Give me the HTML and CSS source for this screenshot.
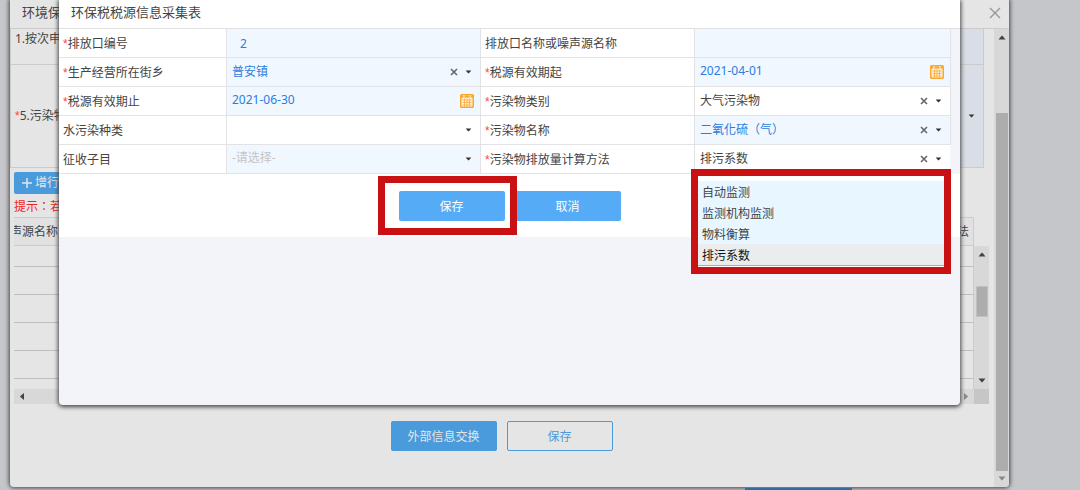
FILE: index.html
```html
<!DOCTYPE html>
<html lang="zh-CN">
<head>
<meta charset="utf-8">
<title>环保税税源信息采集表</title>
<link rel="stylesheet" href="styles.css">
</head>
<body>
<svg class="defs" aria-hidden="true">
  <symbol id="caret" viewBox="0 0 8 5"><path d="M0.500 0.500h7L5 3.500 4 4.500 3 3.500z"/></symbol>
  <symbol id="cross" viewBox="0 0 8 8"><path d="M1 1l6 6M7 1L1 7" fill="none" stroke="currentColor" stroke-width="1.600"/></symbol>
  <symbol id="calendar" viewBox="0 0 14 14">
    <rect x="0.700" y="0.700" width="12.600" height="12.600" rx="1.500" fill="#fff3dc" stroke="#fba62c" stroke-width="1.600"/>
    <path d="M1 2.500h12" stroke="#fba62c" stroke-width="2.200"/>
    <path d="M4 1v3M10 1v3" stroke="#fff3dc" stroke-width="1"/>
    <path d="M2.500 6h9M2.500 8.500h9M2.500 11h9M4.500 4.500v8M7 4.500v8M9.500 4.500v8" stroke="#fbb654" stroke-width="1"/>
  </symbol>
</svg>
<div class="desktop">
  <div class="page-strip"></div>
  <section class="window">
    <header class="window-head">
      <h2 class="window-title">环境保</h2>
      <button class="window-close" type="button" aria-label="关闭"><svg viewBox="0 0 12 12"><path d="M1 1l10 10M11 1L1 11" fill="none" stroke="#969696" stroke-width="1.300"/></svg></button>
    </header>
    <div class="window-body">
      <main class="content">
        <div class="info">
          <div class="info-label">1.按次申</div><div class="info-field"></div>
          <div class="info-label info-tall"><span><i class="req">*</i>5.污染物</span></div>
          <div class="info-field info-tall"><button class="icon-btn" type="button" aria-label="展开"><svg class="caret"><use href="#caret"/></svg></button></div>
        </div>
        <div class="list">
          <button class="add" type="button"><svg viewBox="0 0 10 10"><path d="M5 0v10M0 5h10" stroke="currentColor" stroke-width="1.500"/></svg>增行</button>
          <p class="hint centred-marks">提示：若</p>
          <div class="grid">
            <div class="grid-head"><div class="first-head"><span>声源名称</span></div><span>法</span></div>
            <div class="grid-rows">
              <div class="grid-row short"></div><div class="grid-row"></div><div class="grid-row"></div><div class="grid-row"></div><div class="grid-row"></div>
            </div>
            <div class="v-bar"><svg class="arrow up"><use href="#caret"/></svg><div class="v-thumb"></div><svg class="arrow"><use href="#caret"/></svg></div>
            <div class="h-bar"><svg class="arrow left"><use href="#caret"/></svg><svg class="arrow right faint"><use href="#caret"/></svg></div>
            <div class="corner"></div>
          </div>
          <div class="actions page-actions">
            <button class="btn dim" type="button">外部信息交换</button>
            <button class="btn outline" type="button">保存</button>
          </div>
        </div>
      </main>
      <div class="page-bar"><svg class="arrow up"><use href="#caret"/></svg><div class="page-thumb"></div><svg class="arrow faint"><use href="#caret"/></svg></div>
    </div>

    <section class="modal" role="dialog" aria-labelledby="modal-title">
      <h1 class="modal-title" id="modal-title">环保税税源信息采集表</h1>
      <form>
        <div class="form-area">
          <div class="form-grid">
            <label class="label" for="f-no"><i class="req">*</i>排放口编号</label>
            <div class="field tint"><input class="indent" id="f-no" value="2"></div>
            <label class="label" for="f-outlet">排放口名称或噪声源名称</label>
            <div class="field tint"><input id="f-outlet"></div>

            <label class="label" for="f-town"><i class="req">*</i>生产经营所在街乡</label>
            <div class="field tint"><input id="f-town" value="普安镇"><button class="icon-btn" type="button" aria-label="清除"><svg class="cross"><use href="#cross"/></svg></button><button class="icon-btn" type="button" aria-label="展开"><svg class="caret"><use href="#caret"/></svg></button></div>
            <label class="label" for="f-start"><i class="req">*</i>税源有效期起</label>
            <div class="field tint"><input id="f-start" value="2021-04-01"><button class="icon-btn" type="button" aria-label="选择日期"><svg class="calendar"><use href="#calendar"/></svg></button></div>

            <label class="label" for="f-end"><i class="req">*</i>税源有效期止</label>
            <div class="field tint"><input id="f-end" value="2021-06-30"><button class="icon-btn" type="button" aria-label="选择日期"><svg class="calendar"><use href="#calendar"/></svg></button></div>
            <label class="label" for="f-type"><i class="req">*</i>污染物类别</label>
            <div class="field"><input class="dark" id="f-type" value="大气污染物"><button class="icon-btn" type="button" aria-label="清除"><svg class="cross"><use href="#cross"/></svg></button><button class="icon-btn" type="button" aria-label="展开"><svg class="caret"><use href="#caret"/></svg></button></div>

            <label class="label" for="f-water">水污染种类</label>
            <div class="field"><input id="f-water"><button class="icon-btn" type="button" aria-label="展开"><svg class="caret"><use href="#caret"/></svg></button></div>
            <label class="label" for="f-name"><i class="req">*</i>污染物名称</label>
            <div class="field tint"><input class="centred-marks" id="f-name" value="二氧化硫（气）"><button class="icon-btn" type="button" aria-label="清除"><svg class="cross"><use href="#cross"/></svg></button><button class="icon-btn" type="button" aria-label="展开"><svg class="caret"><use href="#caret"/></svg></button></div>

            <label class="label" for="f-sub">征收子目</label>
            <div class="field tint"><input id="f-sub" placeholder="-请选择-"><button class="icon-btn" type="button" aria-label="展开"><svg class="caret"><use href="#caret"/></svg></button></div>
            <label class="label" for="f-method"><i class="req">*</i>污染物排放量计算方法</label>
            <div class="field active"><input class="dark" id="f-method" value="排污系数" role="combobox" aria-expanded="true" aria-controls="methods"><button class="icon-btn" type="button" aria-label="清除"><svg class="cross"><use href="#cross"/></svg></button><button class="icon-btn" type="button" aria-label="展开"><svg class="caret"><use href="#caret"/></svg></button>
              <div class="popup">
                <ul class="options" id="methods" role="listbox">
                  <li role="option">自动监测</li><li role="option">监测机构监测</li><li role="option">物料衡算</li><li class="chosen" role="option" aria-selected="true">排污系数</li>
                </ul>
              </div>
            </div>
          </div>
        </div>
        <div class="actions form-actions">
          <div class="marked"><button class="btn" type="submit">保存</button></div>
          <button class="btn" type="button">取消</button>
        </div>
      </form>
    </section>
  </section>
</div>
</body>
</html>
```
FILE: styles.css
```css
* { box-sizing: border-box; }

body {
  margin: 0;
  background: #c5c6ca;
  color: #444;
  font: 12px/20px "Noto Sans", "Noto Sans CJK SC", sans-serif;
}

h1, h2, p, ul { margin: 0; padding: 0; font-weight: 400; }
button, input { font: inherit; color: inherit; border: 0; padding: 0; background: none; }
button { cursor: pointer; }
svg { display: block; fill: currentColor; }
.defs { position: absolute; width: 0; height: 0; }
.req { color: #f44; font-family: "Liberation Sans", sans-serif; font-style: normal; }

/* Colons and brackets sit in the middle of their square */
.field .centred-marks, .centred-marks {
  font-family: "Noto Sans", "Noto Sans CJK TC", sans-serif;
  font-feature-settings: "locl" 0;
}

.desktop {
  position: relative;
  min-height: 100vh;
  padding: 0 71px 3px 10px;
  overflow: hidden;
}

.page-strip {
  position: absolute;
  z-index: 1;
  left: 69%;
  bottom: 0;
  width: 107px;
  height: 2px;
  background: #2f6ea3;
}

/* Outer window */
.window {
  position: relative;
  display: flex;
  flex-direction: column;
  min-height: calc(100vh - 3px);
  background: #e5e5e5;
  border-radius: 0 0 4px 4px;
  box-shadow: 0 0 4px 1px #444;
}

.window-head {
  display: flex;
  align-items: center;
  justify-content: space-between;
  height: 29px;
  padding: 0 8px 4px 12px;
  border-bottom: 1px solid #ccc;
}

.window-title { font-size: 13px; }
.window-close { padding: 2px 0 0; }
.window-close svg { width: 12px; height: 12px; }
.window-body { display: flex; flex: 1; }
.content { flex: 1; min-width: 0; padding-right: 10px; }

.info {
  display: grid;
  grid-template-columns: 1fr 1fr;
  border: solid #cbcbcb;
  border-width: 0 1px 1px;
}

.info-label, .info-field { display: flex; height: 35px; padding-left: 4px; }
.info-field { background: #d9dee6; }
.info-tall { height: 103px; align-items: center; border-top: 1px solid #cbcbcb; }
.info-field.info-tall { justify-content: flex-end; padding-right: 4px; }

.list { padding-left: 4px; margin-right: -5px; }

.add {
  display: flex;
  align-items: center;
  gap: 3px;
  width: 60px;
  height: 22px;
  margin-top: 4px;
  padding-left: 8px;
  border-radius: 2px;
  background: #4a9bdc;
  color: #e5e5e5;
}

.add svg { width: 10px; height: 10px; }
.hint { padding: 3px 0 0; color: #e22; }

.grid { display: grid; grid-template-columns: 1fr 15px; }

.grid-head {
  grid-column: 1;
  display: flex;
  justify-content: space-between;
  height: 29px;
  padding: 4px 4px 0 0;
  border: solid #ccc;
  border-width: 1px 1px 1px 0;
  background: #e1e1e1;
}

.first-head { display: flex; justify-content: flex-end; width: 44px; overflow: hidden; white-space: nowrap; }
.grid-rows { grid-column: 1; height: 143px; border-right: 1px solid #ccc; overflow: hidden; }
.grid-row { height: 28px; border-bottom: 1px solid #bebebe; }
.grid-row.short { height: 21px; }

.v-bar, .page-bar {
  display: flex;
  flex-direction: column;
  align-items: center;
  background: #d8d8d8;
}

.v-bar { grid-column: 2; padding: 6px 0; }
.v-thumb { width: 12px; height: 31px; margin: 29px 0 auto; background: #adadad; border: 1px solid #c0c0c0; }

.h-bar {
  display: flex;
  align-items: center;
  justify-content: space-between;
  height: 15px;
  padding: 0 4px;
  background: #d8d8d8;
}

.corner { background: #c6c6c6; }

.page-bar { width: 15px; padding: 6px 0; border-radius: 0 0 4px 0; }
.page-thumb { flex: 1; width: 12px; margin: 73px 0 5px; background: #adadad; }

.arrow { width: 8px; height: 5px; color: #444; }
.arrow.up { transform: rotate(180deg); }
.arrow.left { transform: rotate(90deg); }
.arrow.right { transform: rotate(-90deg); }
.arrow.faint { color: #888; }

/* Buttons */
.actions { display: flex; justify-content: center; gap: 10px; }

.btn {
  width: 106px;
  height: 30px;
  padding-top: 1px;
  border-radius: 2px;
  background: #55abf5;
  color: #fff;
}

.btn.dim { background: #4a9bdc; color: #e5e5e5; }
.btn.outline { border: 1px solid #4a9bdc; background: transparent; color: #4a9bdc; }
.page-actions { padding: 17px 0 36px; }

/* Modal form */
.modal {
  position: absolute;
  top: 0;
  left: 49px;
  right: 49px;
  min-height: 405px;
  border-radius: 0 0 4px 4px;
  background: #f3f4f9;
  box-shadow: 0 1px 4px 1px #444;
}

.modal-title {
  height: 29px;
  padding: 2px 12px 0;
  border-bottom: 1px solid #e0e0e0;
  background: #fff;
  font-size: 13px;
}

.form-area { padding-right: 9px; }

.form-grid {
  display: grid;
  grid-template-columns: 168fr 254fr 214fr 256fr;
  grid-auto-rows: 29px;
}

.label, .field {
  display: flex;
  align-items: center;
  min-width: 0;
  border: solid #e3e3e5;
  border-width: 0 1px 1px 0;
  background: #fff;
}

.label { padding: 2px 0 0 4px; white-space: nowrap; }
.field { padding-right: 4px; }
.field.tint { background: #f0f7ff; }
.field input {
  flex: 1;
  min-width: 0;
  height: 24px;
  padding: 0 0 3px 5px;
  outline: 0;
  color: #2a7ee0;
}

.field .indent { padding: 1px 0 0 13px; }
.field input.dark { color: #444; }
.field input::placeholder { color: #c4c4c8; opacity: 1; }
.field.active { position: relative; border-color: #f0f7ff; }

.icon-btn { display: flex; align-items: center; justify-content: center; width: 15px; height: 20px; }
.caret { width: 7px; height: 4px; color: #333; }
.cross { width: 8px; height: 8px; color: #666; }
.calendar { width: 14px; height: 14px; }
.field .icon-btn:has(.calendar) { width: 18px; }

.popup {
  position: absolute;
  top: 24px;
  left: -4px;
  right: -1px;
  z-index: 2;
  padding: 5px 0 1px;
  border: 7px solid #c91113;
  background: #fff;
}

.options { list-style: none; border-bottom: 1px solid #aaa; background: #e8f7ff; }
.options li { height: 21px; padding-left: 4px; line-height: 23px; }
.options .chosen { background: #ebecee; color: #111; }

.form-actions { padding: 17px 0 16px; background: #fff; }
.marked { position: relative; }

.marked::after {
  content: "";
  position: absolute;
  inset: -15px -12px -14px -21px;
  border: 7px solid #c91113;
  pointer-events: none;
}
```
